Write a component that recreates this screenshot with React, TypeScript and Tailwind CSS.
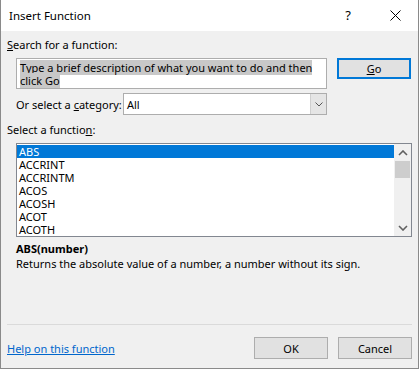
import React from 'react';

const functions = ['ABS', 'ACCRINT', 'ACCRINTM', 'ACOS', 'ACOSH', 'ACOT', 'ACOTH'];

const Chevron = ({ up = false }: { up?: boolean }) => (
  <svg width="10" height="6" viewBox="0 0 10 6" className="block">
    <polyline
      points={up ? '1,5 5,1 9,5' : '1,1 5,5 9,1'}
      fill="none"
      stroke="#606060"
      strokeWidth="1.6"
    />
  </svg>
);

export default function App() {
  return (
    <div className="w-[419px] h-[369px] flex flex-col bg-[#f0f0f0] border-x border-b border-[#8a8a8a] text-[11px] leading-[15px] text-black font-['Noto_Sans',sans-serif] overflow-hidden whitespace-nowrap">
      {/* Title bar */}
      <div className="h-[31px] shrink-0 bg-white flex items-center pl-[8px] text-[11.5px]">
        <span className="flex-1">Insert Function</span>
        <span className="w-[12px] text-[13px] mr-[36px] text-center">?</span>
        <svg width="11" height="11" viewBox="0 0 11 11" className="mr-[17px]">
          <path d="M0.5 0.5 L10.5 10.5 M10.5 0.5 L0.5 10.5" stroke="#000" strokeWidth="1" />
        </svg>
      </div>

      <div className="flex-1 flex flex-col pl-[6px] pr-[6px]">
        <div className="mt-[6px] h-[16px] leading-[16px]">
          <span className="underline">S</span>earch for a function:
        </div>

        <div className="mt-[5px] flex items-start ml-[9px]">
          <div className="w-[311px] h-[31px] bg-white border border-[#adadad] pl-[3px] pt-[2px] leading-[13px]">
            <span className="bg-[#c8c8c8]">Type a brief description of what you want to do and then</span>
            <br />
            <span className="bg-[#c8c8c8]">click Go</span>
          </div>
          <button className="ml-[10px] w-[74px] h-[21px] bg-[#e1e1e1] border-2 border-[#0078d7] flex items-center justify-center">
            <span className="underline">G</span>o
          </button>
        </div>

        <div className="mt-[4px] ml-[9px] flex items-center">
          <span className="w-[107px]">
            Or select a <span className="underline">c</span>ategory:
          </span>
          <div className="w-[204px] h-[22px] bg-white border border-[#adadad] flex items-stretch">
            <span className="flex-1 pl-[3px] flex items-center">All</span>
            <span className="w-[16px] bg-[#e5e5e5] border-l border-[#cfcfcf] flex items-center justify-center">
              <svg width="8" height="5" viewBox="0 0 8 5">
                <polyline points="0.5,0.5 4,4 7.5,0.5" fill="none" stroke="#555" strokeWidth="1" />
              </svg>
            </span>
          </div>
        </div>

        <div className="mt-[7px] h-[16px] leading-[16px]">
          Select a functio<span className="underline">n</span>:
        </div>

        <div className="mt-[5px] ml-[9px] w-[396px] h-[94px] border border-[#828790] bg-white flex">
          <div className="flex-1 pt-[1px]">
            {functions.map((f, i) => (
              <div
                key={f}
                className={`h-[13px] leading-[13px] pl-[2px] overflow-hidden ${i === 0 ? 'bg-[#0078d7] text-white' : ''}`}
              >
                {f}
              </div>
            ))}
          </div>
          <div className="w-[17px] bg-[#f0f0f0] flex flex-col items-center">
            <div className="h-[17px] flex items-center justify-center">
              <Chevron up />
            </div>
            <div className="w-[15px] h-[17px] bg-[#cdcdcd]" />
            <div className="flex-1" />
            <div className="h-[17px] flex items-center justify-center">
              <Chevron />
            </div>
          </div>
        </div>

        <div className="mt-[4px] ml-[9px] font-bold">ABS(number)</div>
        <div className="ml-[9px]">Returns the absolute value of a number, a number without its sign.</div>

        <div className="flex-1" />
        <div className="h-px bg-[#dadada]" />

        <div className="mt-[12px] mb-[9px] flex items-center">
          <a className="flex-1 text-[#0066cc] underline cursor-pointer">Help on this function</a>
          <button className="w-[74px] h-[22px] bg-[#e1e1e1] border border-[#adadad]">OK</button>
          <button className="ml-[10px] w-[74px] h-[22px] bg-[#e1e1e1] border border-[#adadad]">Cancel</button>
        </div>
      </div>
    </div>
  );
}
